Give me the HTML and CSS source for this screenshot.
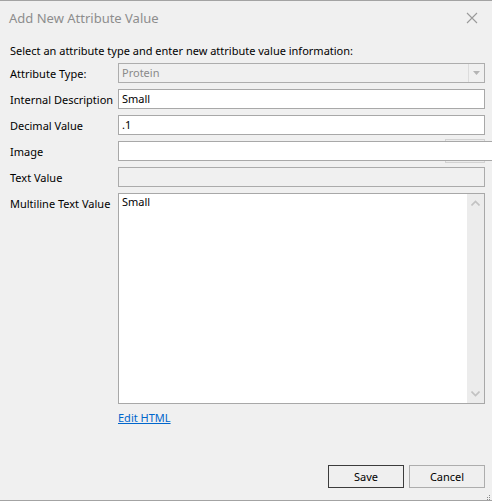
FILE: index.html
```html
<!DOCTYPE html>
<html>
<head>
<meta charset="utf-8">
<link rel="stylesheet" href="styles.css">
</head>
<body>
<div class="dialog">
  <header class="titlebar">
    <span class="title">Add New Attribute Value</span>
    <svg class="close" width="12" height="12" viewBox="0 0 12 12"><path d="M1 1 L11 11 M11 1 L1 11" stroke="#9a9a9a" stroke-width="1.1" fill="none"/></svg>
  </header>
  <main class="content">
    <p class="intro">Select an attribute type and enter new attribute value information:</p>
    <div class="form">
      <label class="label">Attribute Type:</label>
      <div class="select">
        <span class="select-text">Protein</span>
        <span class="select-arrow"><svg width="7" height="4" viewBox="0 0 7 4"><path d="M0 0 H7 L3.5 4 Z" fill="#b4b4b4"/></svg></span>
      </div>

      <label class="label">Internal Description</label>
      <div class="input">Small</div>

      <label class="label">Decimal Value</label>
      <div class="input">.1</div>

      <label class="label">Image</label>
      <div class="image-field">
        <span class="hidden-btn"></span>
        <div class="input input-wide"></div>
      </div>

      <label class="label">Text Value</label>
      <div class="input input-disabled"></div>

      <label class="label label-top">Multiline Text Value</label>
      <div class="textarea">
        <div class="textarea-text">Small</div>
        <div class="scrollbar">
          <svg width="9" height="6" viewBox="0 0 9 6"><path d="M0.5 5.5 L4.5 1.5 L8.5 5.5" stroke="#c2c2c2" stroke-width="1.6" fill="none"/></svg>
          <svg width="9" height="6" viewBox="0 0 9 6"><path d="M0.5 0.5 L4.5 4.5 L8.5 0.5" stroke="#c2c2c2" stroke-width="1.6" fill="none"/></svg>
        </div>
      </div>

      <span></span>
      <a class="link" href="#">Edit HTML</a>
    </div>
  </main>
  <footer class="buttons">
    <button class="btn btn-default">Save</button>
    <button class="btn">Cancel</button>
  </footer>
  <svg class="grip" width="5" height="5" viewBox="0 0 5 5"><rect x="3" y="0" width="1" height="1" fill="#8a8a8a"/><rect x="1" y="2" width="1" height="1" fill="#8a8a8a"/><rect x="3" y="2" width="1" height="1" fill="#8a8a8a"/><rect x="1" y="4" width="1" height="1" fill="#8a8a8a"/><rect x="3" y="4" width="1" height="1" fill="#8a8a8a"/></svg>
</div>
</body>
</html>
```
FILE: styles.css
```css
* { box-sizing: border-box; }
html, body { margin: 0; padding: 0; }
body {
  background: #f0f0f0;
  font-family: "Noto Sans", "Open Sans", sans-serif;
  font-size: 11px;
  color: #000;
  overflow: hidden;
}
.dialog {
  position: relative;
  width: 492px;
  height: 501px;
  border-top: 1px solid #a3a3a3;
  border-bottom: 1px solid #a3a3a3;
  display: flex;
  flex-direction: column;
  overflow: hidden;
}
.titlebar {
  height: 34px;
  display: flex;
  align-items: center;
  justify-content: space-between;
  padding: 0 14px 0 9px;
}
.title {
  font-size: 13px;
  color: #8d8d8d;
}
.close { display: block; }
.content {
  padding: 8px 7px 0 10px;
}
.intro {
  margin: 0 0 4px 0;
  line-height: 16px;
}
.form {
  display: grid;
  grid-template-columns: 108px 367px;
  grid-auto-rows: auto;
  row-gap: 6px;
}
.label {
  display: flex;
  align-items: center;
  height: 20px;
  white-space: nowrap;
}
.label-top { align-self: start; }
.input {
  height: 20px;
  border: 1px solid #a8a8a8;
  background: #fff;
  padding: 0 3px;
  line-height: 18px;
}
.input-disabled {
  background: #f0f0f0;
  border-color: #ababab;
}
.select {
  height: 20px;
  border: 1px solid #adadad;
  background: #f0f0f0;
  display: flex;
  align-items: stretch;
}
.select-text {
  flex: 1;
  padding: 0 3px;
  line-height: 18px;
  color: #8a8a8a;
}
.select-arrow {
  width: 16px;
  border-left: 1px solid #dcdcdc;
  display: flex;
  align-items: center;
  justify-content: center;
}
.select-arrow svg { display: block; }
.image-field {
  position: relative;
  height: 20px;
}
.hidden-btn {
  position: absolute;
  left: 327px;
  top: -2px;
  width: 40px;
  height: 24px;
  border: 1px solid #d2d2d2;
  background: #ececec;
}
.input-wide {
  position: relative;
  width: 400px;
}
.textarea {
  height: 211px;
  border: 1px solid #a8a8a8;
  background: #fff;
  display: flex;
}
.textarea-text {
  flex: 1;
  padding: 0 3px;
  line-height: 16px;
}
.scrollbar {
  width: 17px;
  background: #ececec;
  display: flex;
  flex-direction: column;
  justify-content: space-between;
  align-items: center;
  padding: 6px 0 6px;
}
.scrollbar svg { display: block; }
.link {
  color: #0066cc;
  text-decoration: underline;
  line-height: 16px;
  justify-self: start;
}
.buttons {
  margin-top: auto;
  display: flex;
  justify-content: flex-end;
  gap: 5px;
  padding: 0 7px 12px 0;
}
.btn {
  width: 76px;
  height: 23px;
  font-family: inherit;
  font-size: 11px;
  color: #000;
  background: #efefef;
  border: 1px solid #adadad;
  padding: 0;
}
.btn-default { border-color: #3c3c3c; }
.grip {
  position: absolute;
  right: 1px;
  bottom: 0;
}
```
